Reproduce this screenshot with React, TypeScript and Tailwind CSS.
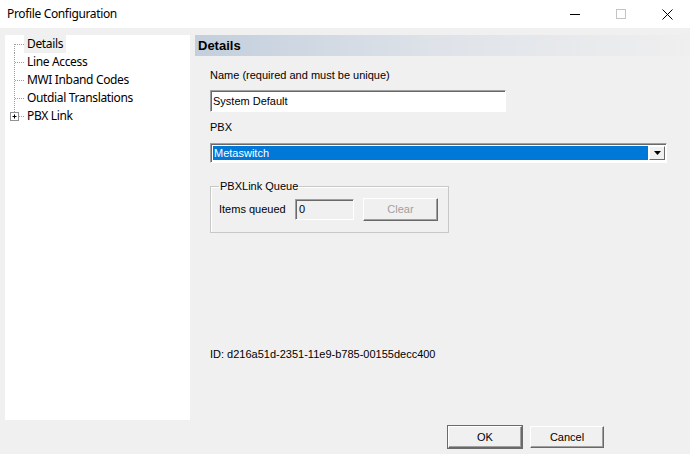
import React from "react";

const treeItems = ["Details", "Line Access", "MWI Inband Codes", "Outdial Translations", "PBX Link"];

function Connector({ index, last }: { index: number; last: boolean }) {
  const top = index === 0 ? 9 : 0;
  const bottom = last ? 9 : 18;
  return (
    <svg width="19" height="18" viewBox="0 0 19 18" className="shrink-0">
      <line x1="9.5" y1={top} x2="9.5" y2={bottom} stroke="#a0a0a0" strokeDasharray="1 1" />
      <line x1={last ? 14 : 10} y1="9.5" x2="19" y2="9.5" stroke="#a0a0a0" strokeDasharray="1 1" />
      {last && (
        <g>
          <rect x="5.5" y="5.5" width="8" height="8" fill="white" stroke="#919191" />
          <line x1="7.5" y1="9.5" x2="11.5" y2="9.5" stroke="#000" />
          <line x1="9.5" y1="7.5" x2="9.5" y2="11.5" stroke="#000" />
        </g>
      )}
    </svg>
  );
}

function Button({ label, disabled, isDefault }: { label: string; disabled?: boolean; isDefault?: boolean }) {
  return (
    <div
      className={
        "flex-1 flex items-center justify-center border border-t-white border-l-white border-r-[#696969] border-b-[#696969] bg-[#f0f0f0] shadow-[inset_-1px_-1px_0_#a0a0a0] " +
        (isDefault ? "outline outline-1 outline-[#6b6b6b]" : "")
      }
    >
      <span className={disabled ? "text-[#a0a0a0]" : "text-black"}>{label}</span>
    </div>
  );
}

export default function App() {
  return (
    <div className="w-[690px] h-[454px] bg-[#f0f0f0] flex flex-col font-['Liberation_Sans',Arial,sans-serif] text-[11px] text-black overflow-hidden">
      {/* title bar */}
      <div className="h-[28px] bg-white flex items-center shrink-0">
        <span className="pl-[7px] font-['Noto_Sans',sans-serif] text-[12px] tracking-[-0.35px] flex-1">
          Profile Configuration
        </span>
        <div className="flex items-center h-full">
          <div className="w-[46px] flex justify-center">
            <div className="w-[10px] h-px bg-black" />
          </div>
          <div className="w-[46px] flex justify-center">
            <div className="w-[10px] h-[10px] border border-[#c4c4c4]" />
          </div>
          <div className="w-[46px] flex justify-center">
            <svg width="11" height="11" viewBox="0 0 11 11">
              <path d="M0.5 0.5 L10.5 10.5 M10.5 0.5 L0.5 10.5" stroke="#000" strokeWidth="1" />
            </svg>
          </div>
        </div>
      </div>

      {/* body */}
      <div className="flex pt-[7px] pl-[5px] h-[392px] shrink-0">
        {/* tree */}
        <div className="w-[185px] h-[385px] bg-white flex flex-col font-['Noto_Sans',sans-serif] text-[12px]">
          {treeItems.map((item, i) => (
            <div key={item} className="h-[18px] flex items-center">
              <Connector index={i} last={i === treeItems.length - 1} />
              <span
                className={
                  "h-[18px] leading-[18px] px-[3px] tracking-[-0.35px] " + (i === 0 ? "bg-[#f0f0f0]" : "")
                }
              >
                {item}
              </span>
            </div>
          ))}
        </div>

        {/* details panel */}
        <div className="ml-[5px] flex-1 flex flex-col">
          <div className="h-[21px] bg-gradient-to-r from-[#c3cfdd] via-[#dfe3e9] to-[#efefef] flex items-center pl-[3px]">
            <span className="font-bold text-[13px]">Details</span>
          </div>

          <div className="pl-[15px] flex flex-col">
            <div className="mt-[13px] leading-[13px]">Name (required and must be unique)</div>
            <div className="mt-[8px] w-[296px] h-[22px] bg-white border border-[#a0a0a0] border-b-white border-r-white shadow-[inset_1px_1px_0_#696969] flex items-center pl-[2px]">
              System Default
            </div>

            <div className="mt-[9px] leading-[13px]">PBX</div>
            <div className="mt-[9px] w-[457px] h-[20px] bg-white border border-[#a0a0a0] border-b-white border-r-white shadow-[inset_1px_1px_0_#696969] flex p-[2px] pr-[1px]">
              <div className="flex-1 bg-[#0078d7] text-white flex items-center pl-[1px]">Metaswitch</div>
              <div className="w-[16px] ml-[1px] border border-t-white border-l-white border-r-[#696969] border-b-[#696969] bg-[#f0f0f0] flex items-center justify-center">
                <svg width="7" height="4" viewBox="0 0 7 4">
                  <path d="M0 0 H7 L3.5 4 Z" fill="#000" />
                </svg>
              </div>
            </div>

            <fieldset className="mt-[17px] w-[239px] h-[53px] border border-[#c8c8c8] shadow-[inset_1px_1px_0_white] px-[8px]">
              <legend className="px-[1px] leading-[13px]">PBXLink Queue</legend>
              <div className="flex items-center mt-[5px]">
                <span className="w-[76px]">Items queued</span>
                <div className="w-[59px] h-[21px] bg-[#f0f0f0] border border-[#a0a0a0] border-b-white border-r-white shadow-[inset_1px_1px_0_#696969] flex items-center pl-[3px]">
                  0
                </div>
                <div className="ml-[9px] w-[75px] h-[23px] flex">
                  <Button label="Clear" disabled />
                </div>
              </div>
            </fieldset>

            <div className="mt-[115px] leading-[13px]">ID: d216a51d-2351-11e9-b785-00155decc400</div>
          </div>
        </div>
      </div>

      {/* footer buttons */}
      <div className="flex justify-end gap-[8px] pr-[86px] mt-[6px]">
        <div className="w-[74px] h-[22px] flex">
          <Button label="OK" isDefault />
        </div>
        <div className="w-[74px] h-[22px] flex">
          <Button label="Cancel" />
        </div>
      </div>
    </div>
  );
}
